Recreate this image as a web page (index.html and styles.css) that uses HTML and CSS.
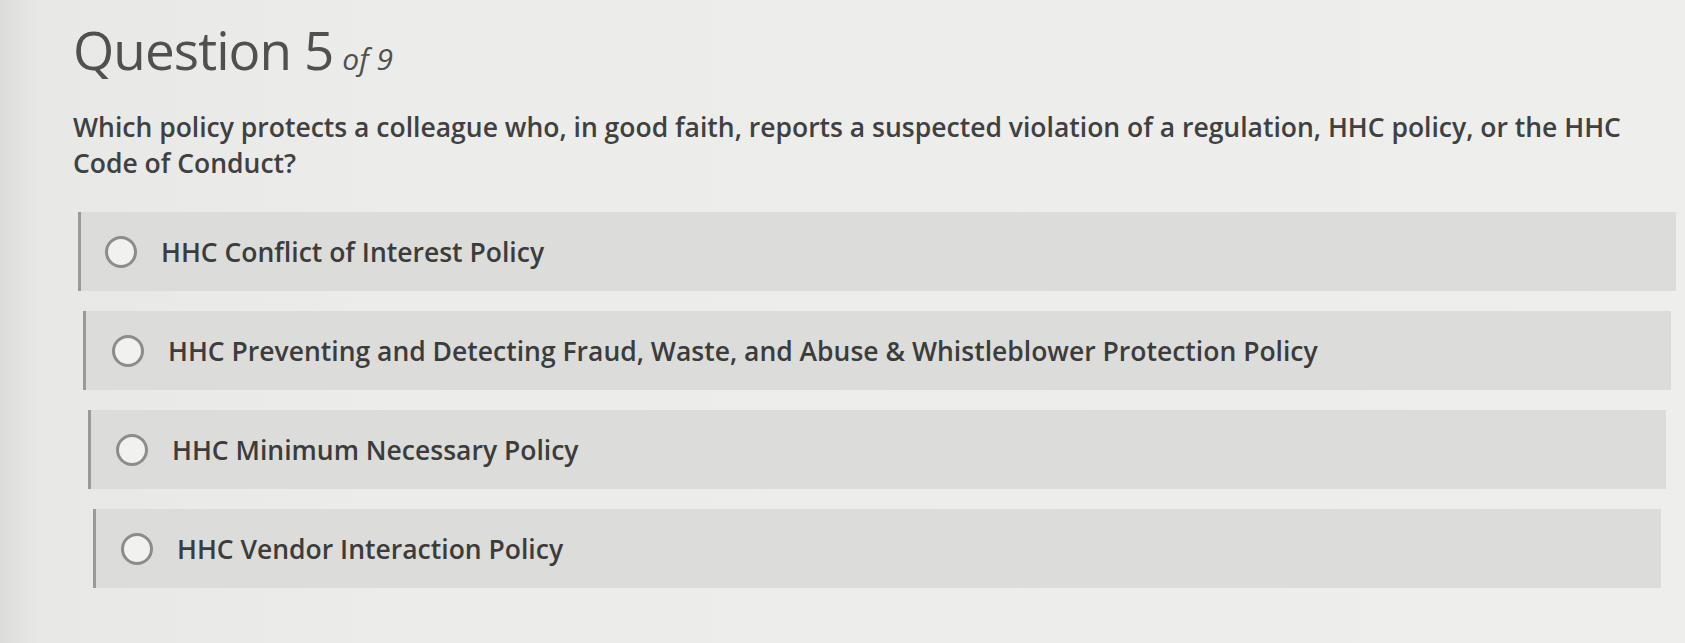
FILE: index.html
```html
<!DOCTYPE html>
<html lang="en">
<head>
  <meta charset="UTF-8">
  <meta name="viewport" content="width=device-width, initial-scale=1.0">
  <title>Question 5 of 9</title>
  <link rel="stylesheet" href="styles.css">
</head>
<body>

  <div class="quiz-container">
    <h1 class="question-title">Question 5 <span class="question-count">of 9</span></h1>
    <p class="question-text">Which policy protects a colleague who, in good faith, reports a suspected violation of a regulation, HHC policy, or the HHC Code of Conduct?</p>

    <ul class="answer-list">
      <li class="answer-item answer-1">
        <span class="radio"></span>
        <span class="answer-label">HHC Conflict of Interest Policy</span>
      </li>
      <li class="answer-item answer-2">
        <span class="radio"></span>
        <span class="answer-label">HHC Preventing and Detecting Fraud, Waste, and Abuse &amp; Whistleblower Protection Policy</span>
      </li>
      <li class="answer-item answer-3">
        <span class="radio"></span>
        <span class="answer-label">HHC Minimum Necessary Policy</span>
      </li>
      <li class="answer-item answer-4">
        <span class="radio"></span>
        <span class="answer-label">HHC Vendor Interaction Policy</span>
      </li>
    </ul>
  </div>

</body>
</html>
```

FILE: styles.css
```css
/* Reset default styles */
* {
  margin: 0;
  padding: 0;
  box-sizing: border-box;
}

/* Body Styling */
body {
  font-family: "Open Sans", "Liberation Sans", Arial, sans-serif;
  color: #3c3c3c;
  background: linear-gradient(90deg, #dcdcda 0, #e8e8e6 38px, #ececea 400px, #eeeeec 100%);
  height: 100vh;
  overflow: hidden;
}

/* Container Styling */
.quiz-container {
  padding: 17px 9px 0 73px;
}

/* Title Styling */
.question-title {
  font-size: 53px;
  font-weight: 400;
  letter-spacing: -0.9px;
  line-height: 66px;
  color: #505050;
}

.question-count {
  font-size: 30px;
  font-style: italic;
  font-weight: 400;
  letter-spacing: 0;
  margin-left: -4px;
}

/* Question Text */
.question-text {
  margin-top: 17px;
  font-size: 26.5px;
  font-weight: 600;
  line-height: 36px;
  color: #404040;
  max-width: 1600px;
}

/* Answer List */
.answer-list {
  list-style: none;
  display: flex;
  flex-direction: column;
  gap: 20px;
  margin-top: 31px;
}

/* Answer Row */
.answer-item {
  display: flex;
  align-items: center;
  gap: 24px;
  height: 79px;
  padding-left: 24px;
  background: #dcdcda;
  border-left: 3px solid #9a9a98;
}

/* Slight drift of each row, as on the photographed screen */
.answer-1 { margin: 0 0 0 5px; }
.answer-2 { margin: 0 5px 0 10px; padding-left: 26px; }
.answer-3 { margin: 0 10px 0 15px; padding-left: 25px; }
.answer-4 { margin: 0 15px 0 20px; padding-left: 25px; }

/* Radio Button */
.radio {
  flex: none;
  width: 32px;
  height: 32px;
  border: 3px solid #8c8c8a;
  border-radius: 50%;
  background: #f1f1ef;
}

/* Answer Label */
.answer-label {
  font-size: 26.5px;
  font-weight: 600;
  color: #3c3c3c;
}
```
